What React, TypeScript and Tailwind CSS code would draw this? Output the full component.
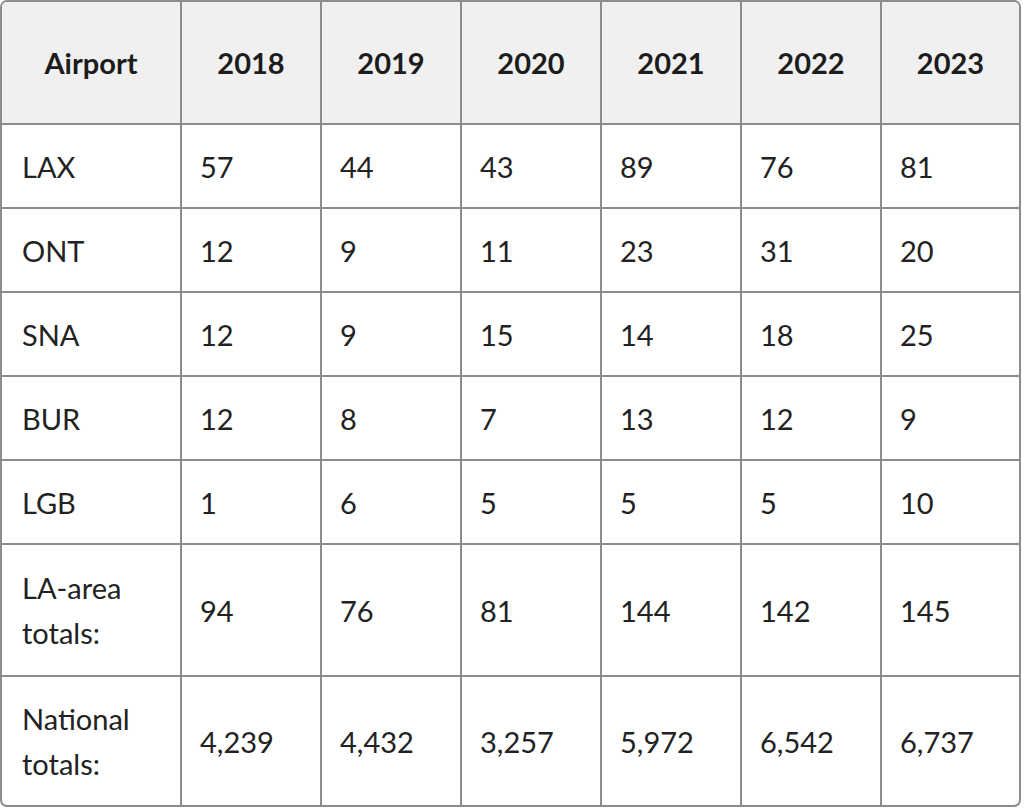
import React from "react";

const headers = ["Airport", "2018", "2019", "2020", "2021", "2022", "2023"];
const rows: { label: React.ReactNode; values: string[]; h: string }[] = [
  { label: "LAX", values: ["57", "44", "43", "89", "76", "81"], h: "h-[84px]" },
  { label: "ONT", values: ["12", "9", "11", "23", "31", "20"], h: "h-[84px]" },
  { label: "SNA", values: ["12", "9", "15", "14", "18", "25"], h: "h-[84px]" },
  { label: "BUR", values: ["12", "8", "7", "13", "12", "9"], h: "h-[84px]" },
  { label: "LGB", values: ["1", "6", "5", "5", "5", "10"], h: "h-[84px]" },
  {
    label: (
      <>
        LA-area
        <br />
        totals:
      </>
    ),
    values: ["94", "76", "81", "144", "142", "145"],
    h: "h-[132px]",
  },
  {
    label: (
      <>
        National
        <br />
        totals:
      </>
    ),
    values: ["4,239", "4,432", "3,257", "5,972", "6,542", "6,737"],
    h: "h-[129px]",
  },
];

export default function App() {
  return (
    <div
      className="w-[1024px] h-[810px] bg-white text-[#222222]"
      style={{ fontFamily: "Lato, 'Noto Sans', sans-serif" }}
    >
      <div className="w-[1021px] border-2 border-[#8c8c8c] rounded-[7px] overflow-hidden">
        <table className="w-full table-fixed border-collapse text-[29px] leading-[45px]">
          <colgroup>
            <col className="w-[179px]" />
            <col className="w-[140px]" />
            <col className="w-[140px]" />
            <col className="w-[140px]" />
            <col className="w-[140px]" />
            <col className="w-[140px]" />
            <col />
          </colgroup>
          <thead>
            <tr className="h-[122px] bg-[#f0f0f0]">
              {headers.map((h, i) => (
                <th
                  key={h}
                  className={`font-bold text-[#1c1c1c] text-center align-middle border-b-2 border-[#8c8c8c] ${
                    i < headers.length - 1 ? "border-r-2" : ""
                  }`}
                >
                  {h}
                </th>
              ))}
            </tr>
          </thead>
          <tbody>
            {rows.map((r, ri) => {
              const last = ri === rows.length - 1;
              return (
                <tr key={ri} className={r.h}>
                  <td
                    className={`px-[20px] align-middle border-r-2 border-[#8c8c8c] ${
                      last ? "" : "border-b-2"
                    }`}
                  >
                    {r.label}
                  </td>
                  {r.values.map((v, vi) => (
                    <td
                      key={vi}
                      className={`px-[18px] align-middle border-[#8c8c8c] ${
                        last ? "" : "border-b-2"
                      } ${vi < r.values.length - 1 ? "border-r-2" : ""}`}
                    >
                      {v}
                    </td>
                  ))}
                </tr>
              );
            })}
          </tbody>
        </table>
      </div>
    </div>
  );
}
